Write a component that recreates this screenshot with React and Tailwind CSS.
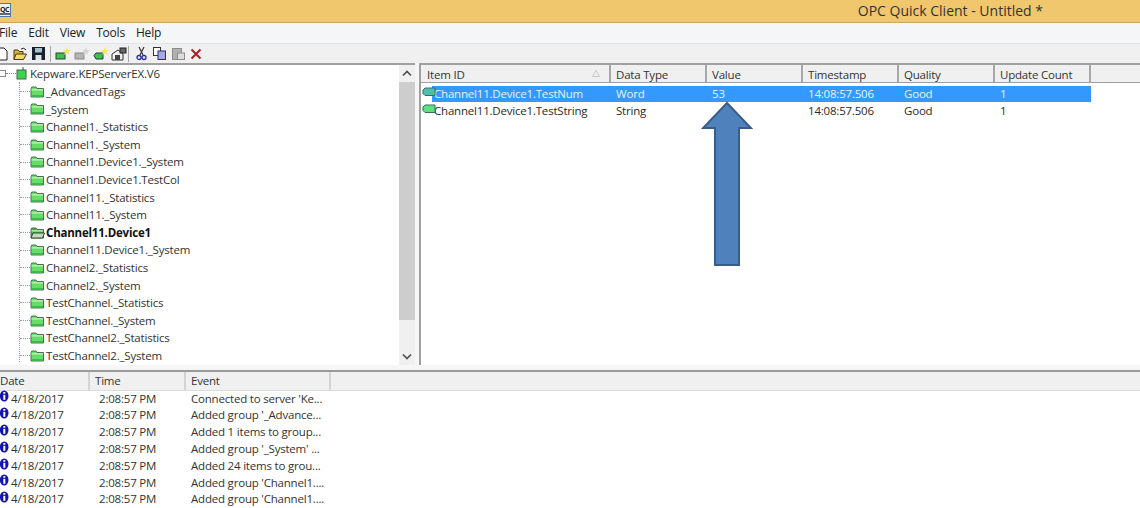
import React from "react";

const F = { fontFamily: '"Open Sans","Noto Sans",sans-serif' };

function Folder({ open }) {
  return (
    <svg width="15" height="12" viewBox="0 0 15 12" className="shrink-0">
      <path d="M1 2.5 L1.8 1 H6 L7 2.5 H13.5 V11 H1 Z" fill={open ? "#4fb04f" : "#66dd66"} stroke="#46604a" strokeWidth="0.9" />
      <rect x="1.5" y="3.2" width="11.5" height="1.3" fill="#c4f0bc" />
      <rect x="1.5" y="9" width="11.5" height="1.6" fill="#3fb84f" />
      {open && <path d="M3 6 H14.5 L12.5 11 H1 Z" fill="#c8d8c0" stroke="#2c4a32" strokeWidth="1" />}
    </svg>
  );
}

function Tag({ color }) {
  return (
    <svg width="14" height="10" viewBox="0 0 14 10" className="shrink-0">
      <path d="M1 3 L3 1 H13 V8.5 H3 L1 6.5 Z" fill={color} stroke="#3d6a60" strokeWidth="1" />
    </svg>
  );
}

function Info() {
  return (
    <svg width="9" height="12" viewBox="0 0 9 12" className="shrink-0">
      <ellipse cx="4.2" cy="6" rx="4.3" ry="5.5" fill="#1212b0" />
      <rect x="3.3" y="2" width="2" height="1.7" fill="#fff" />
      <rect x="3.3" y="4.8" width="2" height="5" fill="#fff" />
    </svg>
  );
}

function Star({ fill }) {
  return <path d="M12 0 L13 3 L16 3 L13.5 5 L14.5 8 L12 6 L9 8 L10 5 L8 3 L11 3 Z" fill={fill} />;
}

function ToolIcons() {
  return (
    <>
      <svg width="8" height="14" viewBox="0 0 8 14" className="shrink-0"><path d="M-2 1 H4 L7 4 V13 H-2 Z" fill="#fff" stroke="#222" /></svg>
      <svg width="14" height="14" viewBox="0 0 14 14" className="ml-[5px] shrink-0"><path d="M1 3 H5 L6 4.5 H10 V12.5 H1 Z" fill="#d8b040" stroke="#4a3c10" /><path d="M3 7 H13.5 L10.5 12.5 H1 Z" fill="#f2d870" stroke="#4a3c10" /><path d="M8 2 Q11 0 13 3" fill="none" stroke="#223" /></svg>
      <svg width="13" height="13" viewBox="0 0 13 13" className="ml-[5px] shrink-0"><rect width="13" height="13" fill="#16202c" /><rect x="3" y="1" width="7" height="4.5" fill="#a8c0c8" /><rect x="3.5" y="8" width="6" height="5" fill="#e0e4e4" /></svg>
      <span className="w-px h-[16px] bg-[#a8a8a8] ml-[5px] shrink-0" />
      <svg width="16" height="14" viewBox="0 0 16 14" className="ml-[4px] shrink-0"><rect x="1" y="6" width="9" height="6" fill="#3fc04f" stroke="#243" /><Star fill="#f0e860" /></svg>
      <svg width="16" height="14" viewBox="0 0 16 14" className="ml-[3px] shrink-0"><rect x="1" y="6" width="9" height="6" fill="#b4b4b4" stroke="#8a8a8a" /><Star fill="#d4d4d4" /></svg>
      <svg width="16" height="14" viewBox="0 0 16 14" className="ml-[3px] shrink-0"><path d="M1 8.5 L3 6 H10 V12 H3 Z" fill="#3fc04f" stroke="#243" /><Star fill="#f0e860" /></svg>
      <svg width="16" height="14" viewBox="0 0 16 14" className="ml-[2px] shrink-0"><path d="M1 7 L7 3 L12 7 V13 H1 Z" fill="#f0f0f0" stroke="#333" /><rect x="4" y="8" width="5" height="5" fill="#444" /><rect x="9" y="1" width="6" height="5" fill="#666" stroke="#222" /></svg>
      <span className="w-px h-[16px] bg-[#a8a8a8] ml-[1px] shrink-0" />
      <svg width="11" height="15" viewBox="0 0 11 15" className="ml-[7px] shrink-0"><path d="M3 1 L7 9 M8 1 L4 9" stroke="#333" strokeWidth="1.2" /><circle cx="3" cy="11.5" r="2" fill="none" stroke="#2a2aa0" strokeWidth="1.3" /><circle cx="8" cy="11.5" r="2" fill="none" stroke="#2a2aa0" strokeWidth="1.3" /></svg>
      <svg width="13" height="13" viewBox="0 0 13 13" className="ml-[6px] shrink-0"><rect x="0.5" y="0.5" width="7" height="8" fill="#fff" stroke="#333" /><rect x="5" y="4" width="7.5" height="8.5" fill="#a8a8e0" stroke="#2a2a90" /></svg>
      <svg width="13" height="13" viewBox="0 0 13 13" className="ml-[6px] shrink-0"><rect x="0.5" y="1.5" width="9" height="11" fill="#b0b0b0" stroke="#8c8c8c" /><rect x="5.5" y="6" width="7" height="6.5" fill="#dcdcdc" stroke="#8c8c8c" /></svg>
      <svg width="12" height="12" viewBox="0 0 12 12" className="ml-[5px] shrink-0"><path d="M1.5 1.5 L10.5 10.5 M10.5 1.5 L1.5 10.5" stroke="#b02020" strokeWidth="2" /></svg>
    </>
  );
}

const tree = [
  "_AdvancedTags", "_System", "Channel1._Statistics", "Channel1._System", "Channel1.Device1._System",
  "Channel1.Device1.TestCol", "Channel11._Statistics", "Channel11._System", "Channel11.Device1",
  "Channel11.Device1._System", "Channel2._Statistics", "Channel2._System", "TestChannel._Statistics",
  "TestChannel._System", "TestChannel2._Statistics", "TestChannel2._System",
];

const cols = [
  ["Item ID", "w-[190px] pl-[6px]"], ["Data Type", "w-[96px] pl-[5px]"], ["Value", "w-[96px] pl-[5px]"],
  ["Timestamp", "w-[96px] pl-[5px]"], ["Quality", "w-[96px] pl-[5px]"], ["Update Count", "w-[96px] pl-[5px]"],
];

const logs = [
  "Connected to server 'Ke...", "Added group '_Advance...", "Added 1 items to group...", "Added group '_System' ...",
  "Added 24 items to grou...", "Added group 'Channel1....", "Added group 'Channel1....",
];

function Row({ selected, tag, id, type, value }) {
  const text = selected ? "text-[#e8f2ff]" : "text-[#2a2a2a]";
  return (
    <div className="flex h-[17px] relative">
      <span className="absolute left-px top-[1px]"><Tag color={tag} /></span>
      <div className={`ml-[11px] w-[659px] h-[16px] flex items-center ${selected ? "bg-[#3399ff]" : ""} ${text}`}>
        <span className="w-[184px] pl-[2px] whitespace-nowrap">{id}</span>
        <span className="w-[96px]">{type}</span>
        <span className="w-[96px]">{value}</span>
        <span className="w-[96px]">14:08:57.506</span>
        <span className="w-[96px]">Good</span>
        <span className="w-[91px]">1</span>
      </div>
    </div>
  );
}

export default function App() {
  return (
    <div className="relative w-[1140px] h-[508px] overflow-hidden bg-white text-[11.5px] tracking-[-0.2px] leading-none text-[#333]" style={F}>
      <header className="h-[23px] bg-[#f0c76c] border-b border-[#c8a860] relative flex items-center justify-end pr-[97px]">
        <div className="absolute left-0 top-[3px] w-[11px] h-[14px] bg-[#eef0f2] border-r border-y border-[#4a7ab0] flex flex-col">
          <span className="block text-[7px] tracking-[-0.5px] font-bold text-[#222] mt-[2px]">QC</span>
          <span className="block h-[2px] mt-auto mb-px bg-[#667]" />
        </div>
        <span className="text-[14px] tracking-normal text-[#333]">OPC Quick Client - Untitled *</span>
      </header>
      <nav className="h-[20px] bg-[#f5f6f7] flex items-center gap-[11px] text-[#222] -ml-px text-[12px]">
        <span>File</span><span>Edit</span><span>View</span><span>Tools</span><span>Help</span>
      </nav>
      <div className="h-[20px] bg-[#f0f0f0] border-t border-[#e4e4e4] flex items-center">
        <ToolIcons />
      </div>
      <main className="h-[307px] bg-[#f6f6f6] flex items-start">
        <section className="w-[415px] h-[302px] border-t-[2px] border-[#a0a0a0] bg-white flex relative overflow-hidden">
          <div className="flex-1 relative">
            <div className="flex items-center h-[18px] pb-px text-[#333]">
              <span className="w-[6px] h-[7px] border border-l-0 border-[#888] shrink-0" />
              <span className="w-[10px] border-t border-dotted border-[#888]" />
              <svg width="11" height="13" viewBox="0 0 11 13" className="shrink-0"><rect x="1" y="3" width="9" height="9" fill="#3fd24f" stroke="#3a6a4a" /><path d="M7 3 V0" stroke="#444" /></svg>
              <span className="ml-[3px]">Kepware.KEPServerEX.V6</span>
            </div>
            <div className="absolute left-[19px] top-[17px] h-[280px] border-l border-dotted border-[#999]" />
            {tree.map((t) => (
              <div key={t} className="flex items-center h-[17.6px]">
                <span className="w-[10px] ml-[20px] border-t border-dotted border-[#999]" />
                <Folder open={t === "Channel11.Device1"} />
                <span className={`ml-px ${t === "Channel11.Device1" ? "font-bold text-[#111]" : ""}`}>{t}</span>
              </div>
            ))}
          </div>
          <div className="w-[16px] bg-[#f0f0f0] flex flex-col shrink-0">
            <div className="h-[17px] flex items-center justify-center">
              <svg width="10" height="7" viewBox="0 0 10 7"><path d="M1 5.5 L5 1.5 L9 5.5" fill="none" stroke="#505050" strokeWidth="1.7" /></svg>
            </div>
            <div className="h-[238px] bg-[#cdcdcd]" />
            <div className="flex-1" />
            <div className="h-[17px] flex items-center justify-center">
              <svg width="10" height="7" viewBox="0 0 10 7"><path d="M1 1.5 L5 5.5 L9 1.5" fill="none" stroke="#505050" strokeWidth="1.7" /></svg>
            </div>
          </div>
        </section>
        <div className="w-[4px]" />
        <section className="flex-1 h-[302px] bg-white border-t-[2px] border-l-[2px] border-[#a0a0a0] relative">
          <div className="flex h-[18px] bg-[#f0f0f0] border-b border-[#a0a0a0]">
            {cols.map(([c, w], i) => (
              <div key={c} className={`${w} border-r-[2px] border-[#a8a8a8] flex items-center pt-[2px] relative`}>
                {c}
                {i === 0 && <svg width="8" height="7" viewBox="0 0 8 7" className="absolute right-[9px] top-[5px]"><path d="M4 0.5 L7.5 6.5 H0.5 Z" fill="none" stroke="#c8c8c8" /></svg>}
              </div>
            ))}
          </div>
          <div className="pt-[3px]">
            <Row selected tag="#4fc0b0" id="Channel11.Device1.TestNum" type="Word" value="53" />
            <Row tag="#5fe07f" id="Channel11.Device1.TestString" type="String" value="" />
          </div>
        </section>
      </main>
      <section>
        <div className="flex h-[21px] bg-[#f0f0f0] border-t-[2px] border-[#9a9a9a] border-b border-b-[#dcdcdc] text-[#333]">
          <div className="w-[90px] border-r-[2px] border-[#d4d4d4] flex items-center">Date</div>
          <div className="w-[96px] border-r-[2px] border-[#d4d4d4] flex items-center pl-[5px]">Time</div>
          <div className="w-[145px] border-r-[2px] border-[#d4d4d4] flex items-center pl-[5px]">Event</div>
        </div>
        <div className="-mt-px">
          {logs.map((l, i) => (
            <div key={i} className="flex items-center h-[16.8px]">
              <span className="w-[10px] -mt-[4px] shrink-0"><Info /></span>
              <span className="w-[89px] pl-px">4/18/2017</span>
              <span className="w-[92px]">2:08:57 PM</span>
              <span>{l}</span>
            </div>
          ))}
        </div>
      </section>
      <svg width="52" height="166" viewBox="0 0 52 166" className="absolute left-[701px] top-[101px]">
        <path d="M26 2 L50 27 H38 V164 H14 V27 H2 Z" fill="#4f81bd" stroke="#385d8a" strokeWidth="2" />
      </svg>
    </div>
  );
}
